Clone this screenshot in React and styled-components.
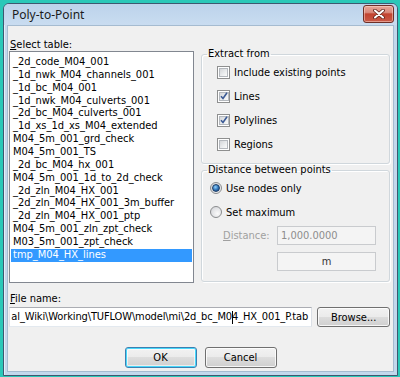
import React from "react";
import styled, { createGlobalStyle } from "styled-components";

const Global = createGlobalStyle`
  html, body { margin: 0; padding: 0; }
  body {
    background: #2ac8b8;
    width: 400px;
    height: 377px;
    overflow: hidden;
    font-family: "DejaVu Sans Condensed", "Liberation Sans", sans-serif;
    font-size: 11px;
    color: #000;
  }
  #root { padding: 3px 0 0 3px; }
`;

const Window = styled.div`
  width: 395px;
  height: 373px;
  box-sizing: border-box;
  border: 1px solid #3d5870;
  border-radius: 6px 6px 0 0;
  background: #c3d8ec;
  padding: 0 3px 3px 3px;
  display: flex;
  flex-direction: column;
  box-shadow: inset 1px 1px 0 #e4eef8;
`;

const TitleBar = styled.div`
  height: 21px;
  display: flex;
  align-items: flex-start;
  justify-content: space-between;
  background: linear-gradient(#bcd3eb, #c9dcf0);
  margin: 0 -3px;
  padding: 0 3px;
  border-radius: 5px 5px 0 0;
`;

const Title = styled.div`
  font-family: "Noto Sans", "Open Sans", sans-serif;
  font-size: 12px;
  line-height: 21px;
  padding-left: 5px;
  color: #1b1b1b;
`;

const CloseBtn = styled.div`
  margin-top: 1px;
  width: 31px;
  height: 18px;
  box-sizing: border-box;
  border: 1px solid #6e2f27;
  border-radius: 3px;
  background: linear-gradient(#e8a598 0%, #d98a7c 40%, #c2432f 50%, #c95a48 100%);
  box-shadow: inset 0 0 0 1px rgba(255, 220, 210, 0.5);
  display: flex;
  align-items: center;
  justify-content: center;
`;

const Client = styled.div`
  flex: 1;
  background: #f0f0f0;
  border: 1px solid #a5bbd0;
  display: flex;
  flex-direction: column;
  padding: 12px 3px 0 1px;
`;

const Top = styled.div`
  display: flex;
  gap: 7px;
`;

const LeftCol = styled.div`
  display: flex;
  flex-direction: column;
  width: 185px;
`;

const Label = styled.div`
  line-height: 13px;
  height: 13px;
  padding-left: 1px;
  color: ${(p) => (p.$disabled ? "#a0a0a0" : "#000")};
`;

const ListBox = styled.div`
  height: 232px;
  box-sizing: border-box;
  border: 1px solid #828790;
  background: #fff;
  padding: 4px 1px 0 1px;
  overflow: hidden;
`;

const ListItem = styled.div`
  height: 12.87px;
  line-height: 12.87px;
  padding-left: 2px;
  white-space: nowrap;
  background: ${(p) => (p.$selected ? "#3399ff" : "transparent")};
  color: ${(p) => (p.$selected ? "#fff" : "#000")};
`;

const RightCol = styled.div`
  display: flex;
  flex-direction: column;
  width: 189px;
  margin-top: 10px;
`;

const Group = styled.fieldset`
  margin: 0;
  padding: 0 0 ${(p) => p.$pb}px 0;
  border: 1px solid #d0d7dc;
  border-radius: 3px;
  box-shadow: inset 1px 1px 0 #fff, 1px 1px 0 #fff;
  min-width: 0;
`;

const Legend = styled.legend`
  margin-left: 5px;
  padding: 0 1px;
  line-height: 12px;
  height: 12px;
  color: #000;
`;

const OptRow = styled.div`
  height: 24px;
  display: flex;
  align-items: center;
  gap: 4px;
  padding-left: ${(p) => p.$indent}px;
`;

const Check = styled.span`
  width: 13px;
  height: 13px;
  box-sizing: border-box;
  border: 1px solid #8e8f8f;
  background: #fff;
  padding: 1px;
  display: flex;
  span {
    flex: 1;
    border: 1px solid #b4b8bd;
    background: linear-gradient(135deg, #d4d6d9 0%, #eceeef 60%, #fafafa 100%);
    display: flex;
    align-items: center;
    justify-content: center;
  }
`;

const Radio = styled.span`
  width: 12px;
  height: 12px;
  box-sizing: border-box;
  border-radius: 50%;
  border: 1px solid #8a8c8e;
  background: radial-gradient(circle at 65% 65%, #fafafa 0%, #dcdde0 70%);
  display: flex;
  align-items: center;
  justify-content: center;
  span {
    width: 6px;
    height: 6px;
    border-radius: 50%;
    background: radial-gradient(circle at 40% 35%, #8fd1ff 0%, #2c6fb3 55%, #1a3f6e 100%);
    border: 0.5px solid #1d3d66;
  }
`;

const DistGrid = styled.div`
  display: grid;
  grid-template-columns: 55px 99px;
  row-gap: 7px;
  margin-top: 2px;
  padding-left: 20px;
  align-items: center;
`;

const DisabledBox = styled.div`
  height: 19px;
  box-sizing: border-box;
  border: 1px solid #c9cbce;
  background: #f4f4f4;
  line-height: 17px;
  padding-left: 3px;
  text-align: ${(p) => (p.$center ? "center" : "left")};
  padding-right: ${(p) => (p.$center ? "3px" : "0")};
  color: ${(p) => (p.$center ? "#333" : "#8d8d8d")};
`;

const FileSection = styled.div`
  margin-top: 9px;
  display: flex;
  flex-direction: column;
`;

const FileRow = styled.div`
  display: flex;
  gap: 5px;
  margin-top: 2px;
  align-items: center;
`;

const TextBox = styled.div`
  width: 304px;
  height: 20px;
  box-sizing: border-box;
  border: 1px solid #abadb3;
  border-color: #abadb3 #dbdfe6 #e3e9ef #e2e3ea;
  background: #fff;
  overflow: hidden;
  display: flex;
  justify-content: flex-end;
  align-items: center;
  padding-right: 3px;
  white-space: nowrap;
  letter-spacing: -0.12px;
`;

const Caret = styled.span`
  display: inline-block;
  width: 1px;
  height: 13px;
  background: #000;
  margin-right: -1px;
  vertical-align: middle;
`;

const Button = styled.div`
  width: ${(p) => p.$w}px;
  height: ${(p) => p.$h}px;
  box-sizing: border-box;
  border: 1px solid ${(p) => (p.$default ? "#3c7fb1" : "#707070")};
  border-radius: 3px;
  background: linear-gradient(#f2f2f2 0%, #ebebeb 49%, #dddddd 50%, #cfcfcf 100%);
  box-shadow: ${(p) =>
    p.$default
      ? "inset 0 0 0 1px #48d8fb, inset 0 0 0 2px rgba(255,255,255,0.6)"
      : "inset 0 0 0 1px rgba(255,255,255,0.8)"};
  display: flex;
  align-items: center;
  justify-content: center;
  color: #000;
`;

const ButtonRow = styled.div`
  display: flex;
  justify-content: center;
  gap: 8px;
  margin-top: 20px;
  padding-left: 2px;
`;

const items = [
  "_2d_code_M04_001",
  "_1d_nwk_M04_channels_001",
  "_1d_bc_M04_001",
  "_1d_nwk_M04_culverts_001",
  "_2d_bc_M04_culverts_001",
  "_1d_xs_1d_xs_M04_extended",
  "M04_5m_001_grd_check",
  "M04_5m_001_TS",
  "_2d_bc_M04_hx_001",
  "M04_5m_001_1d_to_2d_check",
  "_2d_zln_M04_HX_001",
  "_2d_zln_M04_HX_001_3m_buffer",
  "_2d_zln_M04_HX_001_ptp",
  "M04_5m_001_zln_zpt_check",
  "M03_5m_001_zpt_check",
  "tmp_M04_HX_lines",
];

const CheckMark = () => (
  <svg width="8" height="8" viewBox="0 0 8 8">
    <path d="M1 4.2 L3 6.5 L7 0.8" fill="none" stroke="#3b5a95" strokeWidth="1.6" />
  </svg>
);

const CheckBox = ({ checked }) => (
  <Check>
    <span>{checked && <CheckMark />}</span>
  </Check>
);

export default function App() {
  return (
    <>
      <Global />
      <Window>
        <TitleBar>
          <Title>Poly-to-Point</Title>
          <CloseBtn>
            <svg width="12" height="10" viewBox="0 0 12 10">
              <path d="M2 1.5 L10 8.5 M10 1.5 L2 8.5" stroke="#5a1d14" strokeWidth="3.6" strokeLinecap="round" />
              <path d="M2 1.5 L10 8.5 M10 1.5 L2 8.5" stroke="#fff" strokeWidth="2.1" strokeLinecap="round" />
            </svg>
          </CloseBtn>
        </TitleBar>
        <Client>
          <Top>
            <LeftCol>
              <Label>
                <u>S</u>elect table:
              </Label>
              <ListBox>
                {items.map((it, i) => (
                  <ListItem key={it} $selected={i === items.length - 1}>
                    {it}
                  </ListItem>
                ))}
              </ListBox>
            </LeftCol>
            <RightCol>
              <Group $pb={7}>
                <Legend>Extract from</Legend>
                <OptRow $indent={15}>
                  <CheckBox /> Include existing points
                </OptRow>
                <OptRow $indent={15}>
                  <CheckBox checked /> Lines
                </OptRow>
                <OptRow $indent={15}>
                  <CheckBox checked /> Polylines
                </OptRow>
                <OptRow $indent={15}>
                  <CheckBox /> Regions
                </OptRow>
              </Group>
              <Group $pb={10}>
                <Legend>Distance between points</Legend>
                <OptRow $indent={8}>
                  <Radio>
                    <span />
                  </Radio>
                  Use nodes only
                </OptRow>
                <OptRow $indent={8}>
                  <Radio />
                  Set maximum
                </OptRow>
                <DistGrid>
                  <Label $disabled>
                    <u>D</u>istance:
                  </Label>
                  <DisabledBox>1,000.0000</DisabledBox>
                  <span />
                  <DisabledBox $center>m</DisabledBox>
                </DistGrid>
              </Group>
            </RightCol>
          </Top>
          <FileSection>
            <Label>
              <u>F</u>ile name:
            </Label>
            <FileRow>
              <TextBox>
                <span>
                  al_Wiki\Working\TUFLOW\model\mi\2d_bc_M0<Caret />4_HX_001_P.tab
                </span>
              </TextBox>
              <Button $w={73} $h={20}>
                Browse...
              </Button>
            </FileRow>
          </FileSection>
          <ButtonRow>
            <Button $w={72} $h={21} $default>
              OK
            </Button>
            <Button $w={72} $h={21}>
              Cancel
            </Button>
          </ButtonRow>
        </Client>
      </Window>
    </>
  );
}
